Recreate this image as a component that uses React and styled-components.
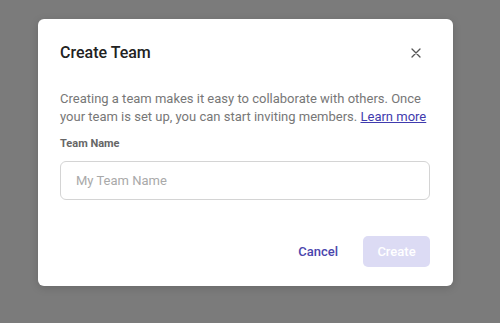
import styled, { createGlobalStyle } from "styled-components";

const GlobalStyle = createGlobalStyle`
  html, body {
    margin: 0;
    padding: 0;
    background: #7b7b7b;
  }
  body {
    font-family: Roboto, "Liberation Sans", sans-serif;
  }
`;

const Backdrop = styled.div`
  width: 500px;
  height: 323px;
  box-sizing: border-box;
  padding: 19px 0 0 38px;
  background: #7b7b7b;
  overflow: hidden;
`;

const Modal = styled.div`
  width: 415px;
  height: 267px;
  box-sizing: border-box;
  padding: 22px 23px 19px 22px;
  background: #fff;
  border-radius: 6px;
  box-shadow: 0 2px 8px rgba(0, 0, 0, 0.15);
  display: flex;
  flex-direction: column;
`;

const Header = styled.div`
  display: flex;
  align-items: center;
  justify-content: space-between;
  height: 24px;
`;

const Title = styled.h2`
  margin: 0;
  font-size: 16px;
  line-height: 24px;
  font-weight: 500;
  color: #222;
`;

const CloseButton = styled.button`
  width: 28px;
  height: 24px;
  border: none;
  background: none;
  padding: 0;
  display: flex;
  align-items: center;
  justify-content: center;
  cursor: pointer;
  color: #555;
`;

const Text = styled.p`
  margin: 25px 0 0;
  font-size: 13px;
  line-height: 18px;
  color: #777;

  a {
    color: #3f3bae;
    text-decoration: underline;
  }
`;

const Label = styled.label`
  display: block;
  margin-top: 10px;
  font-size: 11px;
  line-height: 16px;
  font-weight: 700;
  color: #666;
`;

const Input = styled.input`
  margin-top: 9px;
  width: 100%;
  height: 39px;
  box-sizing: border-box;
  border: 1px solid #d4d4d4;
  border-radius: 6px;
  padding: 0 15px;
  font-family: inherit;
  font-size: 13px;
  color: #333;
  outline: none;

  &::placeholder {
    color: #a9a9a9;
  }
`;

const Footer = styled.div`
  margin-top: auto;
  display: flex;
  justify-content: flex-end;
  gap: 11px;
`;

const Button = styled.button`
  height: 31px;
  min-width: 67px;
  padding: 0 14px;
  border: none;
  border-radius: 5px;
  font-family: inherit;
  font-size: 13px;
  font-weight: 500;
  cursor: pointer;
  background: ${(p) => (p.$primary ? "#dcdbf4" : "transparent")};
  color: ${(p) => (p.$primary ? "#fff" : "#4a45ad")};
`;

export default function App() {
  return (
    <>
      <GlobalStyle />
      <Backdrop>
        <Modal>
          <Header>
            <Title>Create Team</Title>
            <CloseButton aria-label="Close">
              <svg width="10" height="10" viewBox="0 0 10 10">
                <path d="M1 1L9 9M9 1L1 9" stroke="currentColor" strokeWidth="1.3" strokeLinecap="round" />
              </svg>
            </CloseButton>
          </Header>
          <Text>
            Creating a team makes it easy to collaborate with others. Once your team is set up, you can start
            inviting members. <a href="#">Learn more</a>
          </Text>
          <Label htmlFor="team-name">Team Name</Label>
          <Input id="team-name" placeholder="My Team Name" />
          <Footer>
            <Button>Cancel</Button>
            <Button $primary disabled>
              Create
            </Button>
          </Footer>
        </Modal>
      </Backdrop>
    </>
  );
}
